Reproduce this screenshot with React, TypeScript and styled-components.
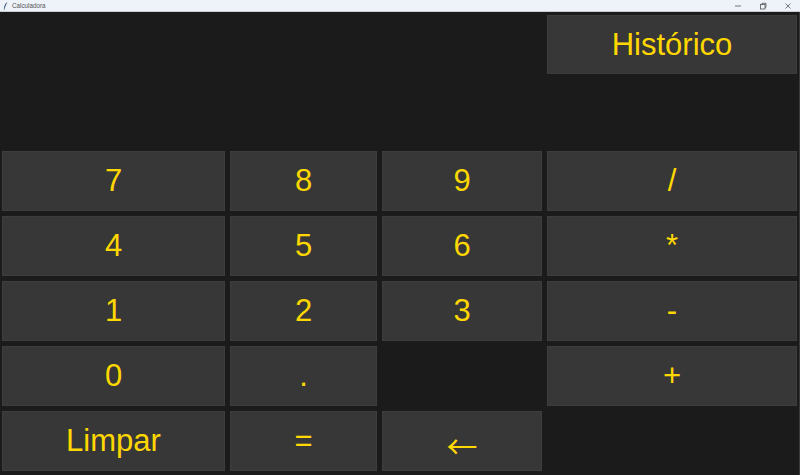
import React from "react";
import styled, { createGlobalStyle } from "styled-components";

const Global = createGlobalStyle`
  html, body { margin: 0; padding: 0; background: #1b1b1b; }
  body { width: 800px; height: 475px; overflow: hidden; }
`;

const Window = styled.div`
  width: 800px;
  height: 475px;
  display: flex;
  flex-direction: column;
  background: #1b1b1b;
  font-family: "Liberation Sans", Arial, sans-serif;
`;

const TitleBar = styled.div`
  height: 11px;
  flex: 0 0 11px;
  display: flex;
  align-items: center;
  background: #eef2f9;
  border-bottom: 1px solid #c9ccd1;
  padding-left: 3px;
`;

const TitleText = styled.span`
  font-size: 6.3px;
  color: #555;
  margin-left: 4px;
  line-height: 11px;
`;

const Controls = styled.div`
  margin-left: auto;
  display: flex;
  height: 100%;
`;

const Control = styled.div`
  width: 25px;
  display: flex;
  align-items: center;
  justify-content: center;
`;

const Keypad = styled.div`
  flex: 1;
  display: grid;
  grid-template-columns: 223px 147px 160px 250px;
  grid-template-rows: 131px repeat(5, 60px);
  column-gap: 5px;
  row-gap: 5px;
  padding: 3px 0 0 2px;
  border-right: 1px solid #3a3a3a;
`;

const Key = styled.div<{ $col: number; $row: number; $arrow?: boolean }>`
  grid-column: ${(p) => p.$col};
  grid-row: ${(p) => p.$row};
  background: #373737;
  border: 1px solid #3d3d3d;
  box-sizing: border-box;
  display: flex;
  align-items: center;
  justify-content: center;
  color: #ffd700;
  font-size: 31px;
  font-family: ${(p) =>
    p.$arrow
      ? `"Noto Sans CJK SC", "Liberation Sans", sans-serif`
      : `"Liberation Sans", Arial, sans-serif`};
  padding-top: ${(p) => (p.$arrow ? "6px" : "0")};
`;

const HistoryKey = styled(Key)`
  align-self: start;
  height: 59px;
`;

const keys: [string, number, number][] = [
  ["7", 1, 2], ["8", 2, 2], ["9", 3, 2], ["/", 4, 2],
  ["4", 1, 3], ["5", 2, 3], ["6", 3, 3], ["*", 4, 3],
  ["1", 1, 4], ["2", 2, 4], ["3", 3, 4], ["-", 4, 4],
  ["0", 1, 5], [".", 2, 5], ["+", 4, 5],
  ["Limpar", 1, 6], ["=", 2, 6], ["←", 3, 6],
];

export default function App() {
  return (
    <>
      <Global />
      <Window>
        <TitleBar>
          <svg width="5" height="8" viewBox="0 0 5 8">
            <path d="M4.5 0 C2 1.5 1 4 0.8 7.8 L1.4 7.8 C2 5 3 3 4.5 0 Z" fill="#3a5a7a" />
          </svg>
          <TitleText>Calculadora</TitleText>
          <Controls>
            <Control>
              <svg width="8" height="8" viewBox="0 0 8 8">
                <line x1="1" y1="4" x2="7" y2="4" stroke="#555" strokeWidth="0.8" />
              </svg>
            </Control>
            <Control>
              <svg width="8" height="8" viewBox="0 0 8 8">
                <rect x="1.5" y="2.5" width="4.5" height="4.5" fill="none" stroke="#555" strokeWidth="0.8" />
                <path d="M3 2.5 V1.3 H7 V5.3 H6" fill="none" stroke="#555" strokeWidth="0.8" />
              </svg>
            </Control>
            <Control>
              <svg width="8" height="8" viewBox="0 0 8 8">
                <path d="M1.5 1.5 L6.5 6.5 M6.5 1.5 L1.5 6.5" stroke="#555" strokeWidth="0.8" />
              </svg>
            </Control>
          </Controls>
        </TitleBar>
        <Keypad>
          <HistoryKey $col={4} $row={1}>Histórico</HistoryKey>
          {keys.map(([label, c, r]) => (
            <Key key={label} $col={c} $row={r} $arrow={label === "←"}>{label}</Key>
          ))}
        </Keypad>
      </Window>
    </>
  );
}
